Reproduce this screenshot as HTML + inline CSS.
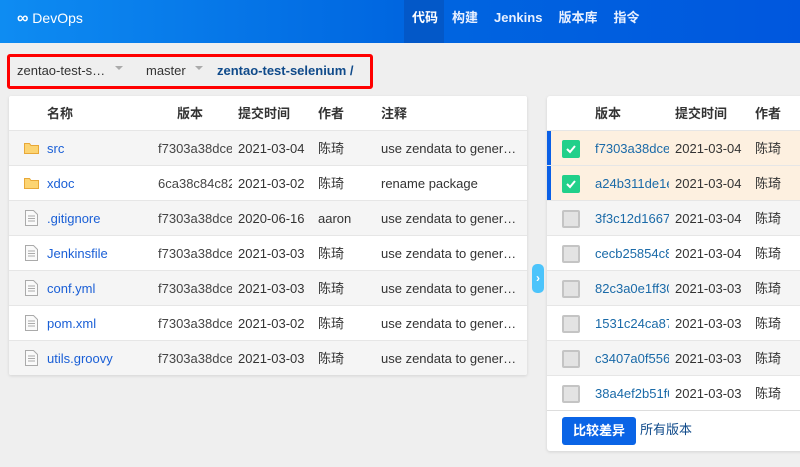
<!DOCTYPE html>
<html><head><meta charset="utf-8"><style>
*{margin:0;padding:0;box-sizing:border-box}
body{width:800px;height:467px;overflow:hidden;background:#efefef;font-family:"Liberation Sans","Noto Sans CJK SC",sans-serif;font-size:13px;color:#333;position:relative}
.hd{position:absolute;left:0;top:0;width:800px;height:43px;background:linear-gradient(90deg,#0e8cf2,#0066e0 50%,#0057de)}
.logo{position:absolute;left:17px;top:9px;color:#fff;font-size:14px;line-height:18px}
.nav{position:absolute;left:404px;top:0;height:43px;display:flex}
.nav div{color:#e8f0ff;font-weight:bold;padding:0 8px;line-height:36px;height:43px;font-size:13px}
.nav .a{background:#0358c8;color:#fff;width:40px;padding:0 0 0 8px}
.bc{position:absolute;left:7px;top:54px;width:366px;height:35px;border:3px solid #f00;border-radius:3px}
.bc span{position:absolute;top:6px;font-size:13px;line-height:16px}
.tri{display:inline-block;border:4px solid transparent;border-top:4px solid #aaa;margin-left:6px;vertical-align:1px}
.pl{position:absolute;left:9px;top:96px;width:518px;height:279px;background:#fff;box-shadow:0 1px 3px rgba(0,0,0,.12);border-radius:2px;overflow:hidden}
.pr{position:absolute;left:547px;top:96px;width:260px;height:355px;background:#fff;box-shadow:0 1px 3px rgba(0,0,0,.12);border-radius:3px;overflow:hidden}
.row{position:absolute;left:0;width:100%;height:35px;border-bottom:1px solid #e6e6e6}
.row span{position:absolute;top:10px;line-height:15px;height:16px;white-space:nowrap;overflow:hidden}
.g{background:#f5f5f5}
.th span{font-weight:bold;color:#333}
.lnk{color:#1a5fd6}
.hash{color:#444;width:74px}
.ok{background:#fdf0e0}
.ok::before{content:"";position:absolute;left:0;top:0;width:4px;height:100%;background:#0a5fe6}
.cb{position:absolute;left:15px;top:9px;width:18px;height:18px;border-radius:2px;background:#e3e3e3;border:2px solid #c4c4c4}
.cb.on{background:#21d08a;border-color:#21d08a}
.hr{color:#1a6aa8;width:74px}
.btn{position:absolute;left:15px;top:321px;width:74px;height:28px;background:#0a64e6;color:#fff;border-radius:3px;font-weight:bold;text-align:center;line-height:28px;font-size:13px}
</style></head><body>
<div class="hd"><div class="logo"><b style="font-size:16px">∞</b> DevOps</div>
<div class="nav"><div class="a">代码</div><div>构建</div><div>Jenkins</div><div>版本库</div><div>指令</div></div></div>
<div class="bc"><span style="left:7px">zentao-test-s… <i class="tri"></i></span><span style="left:136px">master <i class="tri"></i></span><span style="left:207px;color:#0f4a8a;font-weight:bold">zentao-test-selenium /</span></div>

<div class="pl">
<div class="row th" style="top:0"><span style="left:38px">名称</span><span style="left:168px">版本</span><span style="left:229px">提交时间</span><span style="left:309px">作者</span><span style="left:372px">注释</span></div>
<div class="row g" style="top:35px"><span style="left:15px;top:11px"><svg width="15" height="12"><path d="M0.5 1.5h5l1.5 2h7.5v8h-14z" fill="#fcd472" stroke="#e8a838"/></svg></span><span class="lnk" style="left:38px">src</span><span class="hash" style="left:149px">f7303a38dce</span><span style="left:229px">2021-03-04</span><span style="left:309px">陈琦</span><span style="left:372px">use zendata to gener…</span></div>
<div class="row" style="top:70px"><span style="left:15px;top:11px"><svg width="15" height="12"><path d="M0.5 1.5h5l1.5 2h7.5v8h-14z" fill="#fcd472" stroke="#e8a838"/></svg></span><span class="lnk" style="left:38px">xdoc</span><span class="hash" style="left:149px">6ca38c84c82</span><span style="left:229px">2021-03-02</span><span style="left:309px">陈琦</span><span style="left:372px">rename package</span></div>
<div class="row g" style="top:105px"><span style="left:16px;top:9px;height:17px"><svg width="13" height="16"><path d="M.5 .5h8l4 4v11h-12z" fill="#fafafa" stroke="#aaa"/><path d="M3 6h7M3 8.5h7M3 11h7" stroke="#aaa"/></svg></span><span class="lnk" style="left:38px">.gitignore</span><span class="hash" style="left:149px">f7303a38dce</span><span style="left:229px">2020-06-16</span><span style="left:309px">aaron</span><span style="left:372px">use zendata to gener…</span></div>
<div class="row" style="top:140px"><span style="left:16px;top:9px;height:17px"><svg width="13" height="16"><path d="M.5 .5h8l4 4v11h-12z" fill="#fafafa" stroke="#aaa"/><path d="M3 6h7M3 8.5h7M3 11h7" stroke="#aaa"/></svg></span><span class="lnk" style="left:38px">Jenkinsfile</span><span class="hash" style="left:149px">f7303a38dce</span><span style="left:229px">2021-03-03</span><span style="left:309px">陈琦</span><span style="left:372px">use zendata to gener…</span></div>
<div class="row g" style="top:175px"><span style="left:16px;top:9px;height:17px"><svg width="13" height="16"><path d="M.5 .5h8l4 4v11h-12z" fill="#fafafa" stroke="#aaa"/><path d="M3 6h7M3 8.5h7M3 11h7" stroke="#aaa"/></svg></span><span class="lnk" style="left:38px">conf.yml</span><span class="hash" style="left:149px">f7303a38dce</span><span style="left:229px">2021-03-03</span><span style="left:309px">陈琦</span><span style="left:372px">use zendata to gener…</span></div>
<div class="row" style="top:210px"><span style="left:16px;top:9px;height:17px"><svg width="13" height="16"><path d="M.5 .5h8l4 4v11h-12z" fill="#fafafa" stroke="#aaa"/><path d="M3 6h7M3 8.5h7M3 11h7" stroke="#aaa"/></svg></span><span class="lnk" style="left:38px">pom.xml</span><span class="hash" style="left:149px">f7303a38dce</span><span style="left:229px">2021-03-02</span><span style="left:309px">陈琦</span><span style="left:372px">use zendata to gener…</span></div>
<div class="row g" style="top:245px;border:0"><span style="left:16px;top:9px;height:17px"><svg width="13" height="16"><path d="M.5 .5h8l4 4v11h-12z" fill="#fafafa" stroke="#aaa"/><path d="M3 6h7M3 8.5h7M3 11h7" stroke="#aaa"/></svg></span><span class="lnk" style="left:38px">utils.groovy</span><span class="hash" style="left:149px">f7303a38dce</span><span style="left:229px">2021-03-03</span><span style="left:309px">陈琦</span><span style="left:372px">use zendata to gener…</span></div>
</div>

<div style="position:absolute;left:532px;top:264px;width:12px;height:29px;background:#4cc4fb;border-radius:5px;color:#fff;font-weight:bold;font-size:12px;text-align:center;line-height:29px">›</div>

<div class="pr">
<div class="row th" style="top:0"><span style="left:48px">版本</span><span style="left:128px">提交时间</span><span style="left:208px">作者</span></div>
<div class="row ok" style="top:35px"><i class="cb on"><svg width="14" height="14" style="position:absolute;left:0;top:0"><path d="M3 7l3 3 5-6" stroke="#fff" stroke-width="2" fill="none"/></svg></i><span class="hr" style="left:48px">f7303a38dcee</span><span style="left:128px">2021-03-04</span><span style="left:208px">陈琦</span></div>
<div class="row ok" style="top:70px"><i class="cb on"><svg width="14" height="14" style="position:absolute;left:0;top:0"><path d="M3 7l3 3 5-6" stroke="#fff" stroke-width="2" fill="none"/></svg></i><span class="hr" style="left:48px">a24b311de1e</span><span style="left:128px">2021-03-04</span><span style="left:208px">陈琦</span></div>
<div class="row g" style="top:105px"><i class="cb"></i><span class="hr" style="left:48px">3f3c12d1667a</span><span style="left:128px">2021-03-04</span><span style="left:208px">陈琦</span></div>
<div class="row" style="top:140px"><i class="cb"></i><span class="hr" style="left:48px">cecb25854c8</span><span style="left:128px">2021-03-04</span><span style="left:208px">陈琦</span></div>
<div class="row g" style="top:175px"><i class="cb"></i><span class="hr" style="left:48px">82c3a0e1ff30</span><span style="left:128px">2021-03-03</span><span style="left:208px">陈琦</span></div>
<div class="row" style="top:210px"><i class="cb"></i><span class="hr" style="left:48px">1531c24ca87</span><span style="left:128px">2021-03-03</span><span style="left:208px">陈琦</span></div>
<div class="row g" style="top:245px"><i class="cb"></i><span class="hr" style="left:48px">c3407a0f5564</span><span style="left:128px">2021-03-03</span><span style="left:208px">陈琦</span></div>
<div class="row" style="top:280px;border-bottom:1px solid #ddd"><i class="cb"></i><span class="hr" style="left:48px">38a4ef2b51f0</span><span style="left:128px">2021-03-03</span><span style="left:208px">陈琦</span></div>
<div class="btn">比较差异</div>
<span style="position:absolute;left:93px;top:326px;line-height:16px;color:#0f4a8a">所有版本</span>
</div>
</body></html>
